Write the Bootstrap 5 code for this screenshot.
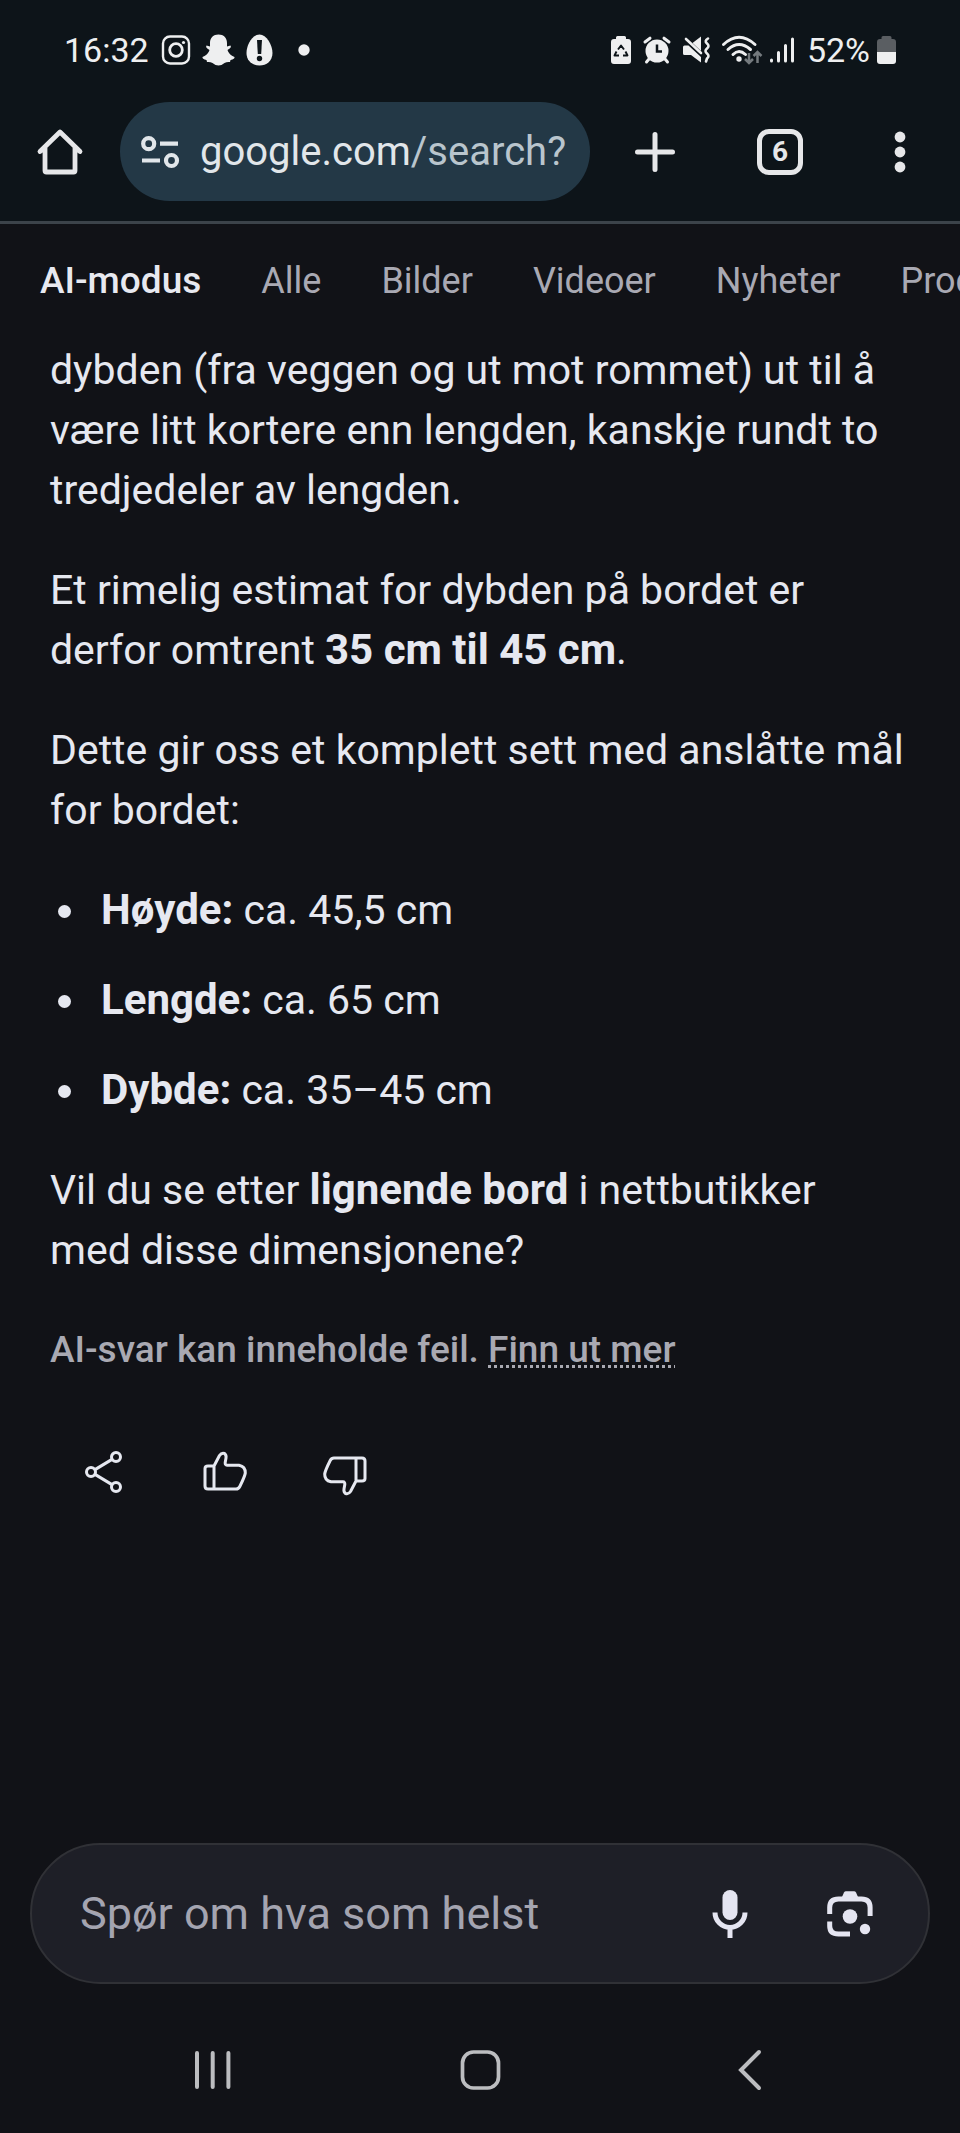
<!DOCTYPE html>
<html lang="nb">
<head>
<meta charset="utf-8">
<meta name="viewport" content="width=device-width, initial-scale=1">
<title>AI-modus</title>
<link rel="stylesheet" href="https://cdn.jsdelivr.net/npm/bootstrap@5.3.0/dist/css/bootstrap.min.css">
<style>
  body { background: #111217; color: #e6e8f0; font-family: Roboto, "Liberation Sans", sans-serif; font-size: 41px; line-height: 60px; }
  svg { display: block; flex: none; overflow: visible; }
  .stroke { fill: none; stroke: currentColor; stroke-linecap: round; stroke-linejoin: round; }
  .btn { --bs-btn-color: currentColor; --bs-btn-hover-color: currentColor; --bs-btn-active-color: currentColor; --bs-btn-padding-x: 0; --bs-btn-padding-y: 0; border: 0; display: flex; align-items: center; justify-content: center; }

  .chrome { background: #0d1419; border-bottom: 3px solid #3c434a; padding-bottom: 20px; color: #e6e7e9; }
  .status { padding: 30px 64px 32px 64px; font-size: 34px; line-height: 40px; color: #eeeff0; }
  .gap-icons { gap: 12px; }
  .gap-tight { gap: 7px; }
  .gap-notes { gap: 11px; }
  .tool { width: 120px; height: 96px; flex: none; }
  .tool-wide { width: 130px; }
  .address { height: 99px; background: #233846; color: #e1e6ea; padding: 0 20px; gap: 20px; font-size: 40px; line-height: 48px; min-width: 0; }
  .address:hover { background: #233846; }
  .address .path { color: #b9c5cd; }
  .tab-count { width: 46px; height: 46px; border: 5px solid; border-radius: 12px; font-size: 28px; line-height: 36px; font-weight: 700; }

  .filters { padding: 37px 0 0 40px; gap: 60px; font-size: 36px; line-height: 40px; white-space: nowrap; }
  .filters a { color: #a9a9b3; text-decoration: none; }
  .filters a.active { color: #e8e9f0; font-weight: 500; font-size: 37px; }

  .answer { padding: 39px 50px 0; }
  .answer p, .answer ul { margin: 0 0 40px; }
  .answer strong { font-weight: 700; font-size: 42px; line-height: 48px; }
  .answer li + li { margin-top: 30px; }
  .answer li { padding-left: 51px; }
  .answer li::before { content: ""; display: inline-block; width: 13px; height: 13px; margin: 0 30px 0 -43px; border-radius: 50%; background: currentColor; vertical-align: 6px; }
  .answer .notice { font-size: 37px; font-weight: 500; color: #a9a9b2; margin: 0; }
  .notice a { color: inherit; text-decoration: underline dotted 3px; text-underline-offset: 3px; text-decoration-skip-ink: none; }
  .actions { padding: 44px; }

  .prompt { margin: 0 30px; height: 141px; background: #1e1f27; border: 2px solid #303136; padding: 0 18px 0 48px; color: #e5e5f1; }
  .prompt input { background: none; border: 0; outline: 0; color: inherit; font-size: 45px; line-height: 60px; min-width: 0; padding: 0; }
  .prompt input::placeholder { color: #a4a4b0; opacity: 1; }
  .system { padding: 24px 80px 1px; color: #bcbdc0; }
  .system .btn { height: 124px; }
</style>
</head>
<body>
<div class="d-flex flex-column min-vh-100 overflow-hidden">

  <header class="chrome">
    <div class="status d-flex justify-content-between align-items-center">
      <div class="d-flex align-items-center gap-icons">
        <span>16:32</span>
        <div class="d-flex align-items-center gap-notes">
          <svg width="30" height="32" viewBox="0 0 30 32" class="stroke" stroke-width="2.4"><rect x="2" y="2.5" width="26" height="27" rx="7"/><circle cx="15" cy="16" r="6.3" stroke-width="2.8"/><circle cx="22.5" cy="8.5" r="1.6" fill="currentColor" stroke="none"/></svg>
          <svg width="33" height="32" viewBox="0 0 33 32" fill="currentColor"><path d="M16.5.5C21.600.5 25 3.700 25 9V12.500L28.500 11.500Q30 13.500 25.500 16Q27 21 32.500 23Q33 25 28.500 26L28 28Q25 27.500 22.500 29Q19.500 31.500 16.500 31.500T10.500 29Q8 27.500 5 28L4.500 26Q0 25 .5 23Q6 21 7.500 16Q3 13.500 4.500 11.500L8 12.500V9C8 3.700 11.400.5 16.500.5Z"/></svg>
          <svg width="27" height="32" viewBox="0 0 27 32"><path fill="currentColor" d="M13.500.5C20.500.5 26.500 11 26.500 19C26.500 27 20.500 31.500 13.500 31.500S.5 27 .5 19C.5 11 6.500.5 13.500.5Z"/><path fill="#0d1419" d="M11 6h5l-.8 14h-3.400z"/><circle cx="13.500" cy="24.500" r="2.700" fill="#0d1419"/></svg>
        </div>
        <svg width="36" height="12" viewBox="0 0 36 12"><circle cx="19" cy="6" r="5.700" fill="currentColor"/></svg>
      </div>
      <div class="d-flex align-items-center gap-icons">
        <svg width="20" height="28" viewBox="0 0 20 28"><path fill="currentColor" d="M5 3V1.500Q5 0 6.500 0h7Q15 0 15 1.500V3h2q3 0 3 3v19q0 3-3 3H3q-3 0-3-3V6q0-3 3-3z"/><path d="M7 13.500L10 9.500L13 13.500M14.500 15.500L16.500 19.500H12M8 19.500H3.500L5.500 15.500" fill="none" stroke="#0d1419" stroke-width="1.900" stroke-linejoin="round"/></svg>
        <svg width="28" height="28" viewBox="0 0 28 28"><circle cx="14" cy="15" r="11.500" fill="currentColor"/><path class="stroke" stroke-width="3" d="M2 6L7 2.200M26 6L21 2.200M6 23L3.500 26M22 23L24.500 26"/><path d="M14 8.500V15.500H19" fill="none" stroke="#0d1419" stroke-width="2.500"/></svg>
        <svg width="27" height="28" viewBox="0 0 27 28"><path fill="currentColor" d="M0 11Q0 9.500 1.500 9.500H5.500L18 21V26.500L8 19H1.500Q0 19 0 17.500ZM9.500 7L18 .500V15Z"/><path class="stroke" stroke-width="2.600" d="M3 3L18 17"/><path class="stroke" stroke-width="2.600" d="M25 2.500q-4 2.500-1 5t0 5t0 5t0 5l-1 3"/></svg>
        <div class="d-flex align-items-center gap-tight">
          <svg width="40" height="30" viewBox="0 0 40 30"><path class="stroke" stroke-width="3" d="M1.500 9.500Q17 -5 33 9.500M6 14.500Q17 4.500 28.500 14.500M11 19.500Q17 13.500 23.500 19.500"/><circle cx="17" cy="24" r="2.700" fill="currentColor"/><path d="M27 18v10m-4-4l4 4l4-4M35.500 28V17m-4 4l4-4l4 4" fill="none" stroke="#747a7e" stroke-width="2.500"/></svg>
          <svg width="26" height="28" viewBox="0 0 26 28"><path class="stroke" stroke-width="3" d="M2.500 24V25M9.500 16.500V25M16.500 9.500V25M23.500 3V25"/></svg>
        </div>
        <div class="d-flex align-items-center gap-tight">
          <span>52%</span>
          <svg width="19" height="28" viewBox="0 0 19 28"><path fill="#5a5e62" d="M4.500 3V1.500Q4.500 0 6 0h7q1.500 0 1.500 1.500V3H16q3 0 3 3v11H0V6q0-3 3-3z"/><path fill="currentColor" d="M0 16H19V25q0 3-3 3H3q-3 0-3-3z"/></svg>
        </div>
      </div>
    </div>

    <nav class="d-flex align-items-center" aria-label="Nettleser">
      <button class="btn tool" type="button" aria-label="Startside">
        <svg width="46" height="46" viewBox="0 0 46 46" class="stroke" stroke-width="4.800"><path d="M3 22.500L23 3L43 22.500M8 19V41.500Q8 43 9.500 43H36.500Q38 43 38 41.500V19"/></svg>
      </button>
      <button class="btn address rounded-pill flex-grow-1 justify-content-start" type="button">
        <svg width="40" height="36" viewBox="0 0 40 36" fill="none" stroke="currentColor" stroke-width="4.200"><circle cx="8.700" cy="9.700" r="5.500"/><circle cx="31.500" cy="26.500" r="5.500"/><path d="M20 9.700H38M2 26.500H20"/></svg>
        <span class="text-nowrap">google.com<span class="path">/search?</span></span>
      </button>
      <button class="btn tool tool-wide" type="button" aria-label="Ny fane">
        <svg width="40" height="40" viewBox="0 0 40 40" class="stroke" stroke-width="5"><path d="M20 2.500V37.500M2.500 20H37.500"/></svg>
      </button>
      <button class="btn tool" type="button" aria-label="Faner"><span class="tab-count">6</span></button>
      <button class="btn tool" type="button" aria-label="Meny">
        <svg width="12" height="42" viewBox="0 0 12 42" fill="currentColor"><circle cx="6" cy="6" r="5.400"/><circle cx="6" cy="21" r="5.400"/><circle cx="6" cy="36" r="5.400"/></svg>
      </button>
    </nav>
  </header>

  <nav class="filters d-flex" aria-label="Søketyper">
    <a class="active" href="#" aria-current="page">AI-modus</a>
    <a href="#">Alle</a>
    <a href="#">Bilder</a>
    <a href="#">Videoer</a>
    <a href="#">Nyheter</a>
    <a href="#">Produkter</a>
  </nav>

  <main>
    <article class="answer">
      <p>dybden (fra veggen og ut mot rommet) ut til å være litt kortere enn lengden, kanskje rundt to tredjedeler av lengden.</p>
      <p>Et rimelig estimat for dybden på bordet er derfor omtrent <strong>35 cm til 45 cm</strong>.</p>
      <p>Dette gir oss et komplett sett med anslåtte mål for bordet:</p>
      <ul class="list-unstyled">
        <li><strong>Høyde:</strong> ca. 45,5 cm</li>
        <li><strong>Lengde:</strong> ca. 65 cm</li>
        <li><strong>Dybde:</strong> ca. 35–45 cm</li>
      </ul>
      <p>Vil du se etter <strong>lignende bord</strong> i nettbutikker med&nbsp;disse dimensjonene?</p>
      <p class="notice">AI-svar kan inneholde feil. <a href="#">Finn ut mer</a></p>
    </article>
    <div class="actions d-flex">
      <button class="btn tool" type="button" aria-label="Del">
        <svg width="46" height="46" viewBox="0 0 46 46" class="stroke" stroke-width="3"><circle cx="10" cy="23" r="4.500"/><circle cx="35" cy="8" r="4.500"/><circle cx="35" cy="38" r="4.500"/><path d="M14 20.600L31 10.400M14 25.400L31 35.600"/></svg>
      </button>
      <button class="btn tool" type="button" aria-label="Bra svar">
        <svg width="46" height="46" viewBox="0 0 46 46" class="stroke" stroke-width="3"><path id="thumb" d="M13 17L18.500 6.500Q20.500 3.500 23.500 4.500Q25.500 6 25 9L24.200 13.500Q24 16.200 26 16.200H38Q44.500 17.500 44.300 24Q44 27 38.800 37.500Q37.500 40 35 40H7Q4 40 4 37V19.500Q4 17 7 17H13V40"/></svg>
      </button>
      <button class="btn tool" type="button" aria-label="Dårlig svar">
        <svg width="46" height="46" viewBox="0 0 46 46" class="stroke" stroke-width="3"><use href="#thumb" transform="rotate(180 24 24.500)"/></svg>
      </button>
    </div>
  </main>

  <footer class="mt-auto">
    <form class="prompt rounded-pill d-flex align-items-center">
      <input class="flex-grow-1" type="text" placeholder="Spør om hva som helst" aria-label="Spør om hva som helst">
      <button class="btn tool" type="button" aria-label="Talesøk">
        <svg width="40" height="52" viewBox="0 0 40 52"><rect x="12.500" y="2" width="15" height="30" rx="7.500" fill="currentColor"/><path d="M5 24.500a15 15 0 0 0 30 0M20 39.500V50" fill="none" stroke="currentColor" stroke-width="5"/></svg>
      </button>
      <button class="btn tool" type="button" aria-label="Bildesøk">
        <svg width="48" height="48" viewBox="0 0 48 48" fill="currentColor"><path d="M3.700 24V17.500Q3.700 9 12.500 9H35.500Q44.100 9 44.100 17.500V26M3.700 31.500V36Q3.700 44 12.500 44H24" fill="none" stroke="currentColor" stroke-width="5"/><path d="M15.500 8L18 2.500Q18.600 1.300 20 1.300H28Q29.400 1.300 30 2.500L32.500 8Z"/><circle cx="24" cy="26.500" r="7.300"/><circle cx="39" cy="39" r="5.200"/></svg>
      </button>
    </form>
    <nav class="system d-flex" aria-label="System">
      <button class="btn flex-fill w-100" type="button" aria-label="Siste apper"><svg width="40" height="40" viewBox="0 0 40 40" class="stroke" stroke-width="4"><path d="M4 3V37M19.700 3V37M35.400 3V37"/></svg></button>
      <button class="btn flex-fill w-100" type="button" aria-label="Hjem"><svg width="40" height="40" viewBox="0 0 40 40" class="stroke" stroke-width="3.700"><rect x="2.500" y="2" width="36" height="36" rx="11"/></svg></button>
      <button class="btn flex-fill w-100" type="button" aria-label="Tilbake"><svg width="40" height="40" viewBox="0 0 40 40" class="stroke" stroke-width="4"><path stroke-linejoin="miter" d="M32 2L14 20L32 38"/></svg></button>
    </nav>
  </footer>
</div>
<script src="https://cdn.jsdelivr.net/npm/bootstrap@5.3.0/dist/js/bootstrap.bundle.min.js"></script>
</body>
</html>
